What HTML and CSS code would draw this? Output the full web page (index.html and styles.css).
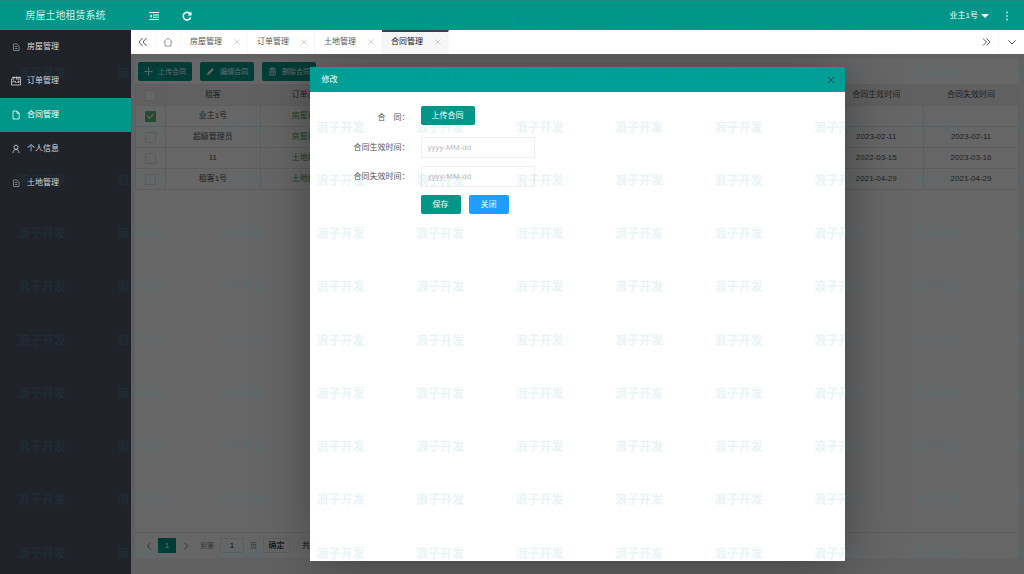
FILE: index.html
```html
<!DOCTYPE html>
<html lang="zh-CN">
<head>
<meta charset="utf-8">
<meta name="viewport" content="width=device-width, initial-scale=1">
<title>房屋土地租赁系统</title>
<link rel="stylesheet" href="styles.css">
</head>
<body>
<div class="app">
  <aside class="sidebar">
    <h1 class="brand">房屋土地租赁系统</h1>
    <nav class="menu">
      <a class="menu-item" href="#"><svg class="menu-icon dim" viewBox="0 0 10 10"><path d="M2.500 2h3.500l2 2v4.500H2.500zM4 4.500h2.500M4 6.500h2.500"/></svg>房屋管理</a>
      <a class="menu-item" href="#"><svg class="menu-icon" viewBox="0 0 10 10"><path d="M1 1.500h9M.5 3h3M.5 3v6h9V3M5 3h5M3 .5v2M5.500 .5v2M8 .5v2M2 6.500V5h1.200v1M4.500 5v1.500h1.200M7 5h1v1.500H7z"/></svg>订单管理</a>
      <a class="menu-item active" href="#"><svg class="menu-icon" viewBox="0 0 10 10"><path d="M2 1h4l2.200 2.200V9H2zM6 1v2.300h2.200"/></svg>合同管理</a>
      <a class="menu-item" href="#"><svg class="menu-icon" viewBox="0 0 10 10"><circle cx="5" cy="3.200" r="2.100"/><path d="M2 9C2 6.500 3.500 5.500 5 5.500S8 6.500 8 9"/></svg>个人信息</a>
      <a class="menu-item" href="#"><svg class="menu-icon dim" viewBox="0 0 10 10"><path d="M2.500 2h3.500l2 2v4.500H2.500zM4 4.500h2.500M4 6.500h2.500"/></svg>土地管理</a>
    </nav>
  </aside>

  <div class="main">
    <header class="topbar">
      <button class="icon-btn" aria-label="收起菜单"><svg width="10" height="10" viewBox="0 0 10 10"><path d="M0 1.500h10M4 4h6M4 6.200h6M0 8.500h10"/><path class="solid" d="M3 3.200v3.800L.3 5.100z"/></svg></button>
      <button class="icon-btn" aria-label="刷新"><svg class="bold" width="10" height="10" viewBox="0 0 10 10"><path d="M8.600 6.500A3.800 3.800 0 1 1 7.800 2.500"/><path class="solid" d="M9.500.6v3.900H5.600z"/></svg></button>
      <span class="grow"></span>
      <button class="user">业主1号<span class="caret"></span></button>
      <button class="more" aria-label="更多"><svg width="4" height="10" viewBox="0 0 4 10"><path d="M1.300 1.500h1.400M1.300 5h1.400M1.300 8.500h1.400"/></svg></button>
    </header>

    <div class="tabs">
      <button class="tab-ctl" aria-label="向左"><svg width="10" height="10" viewBox="0 0 10 10"><path d="M4.500 1L1 5l3.500 4M8.500 1L5 5l3.500 4"/></svg></button>
      <button class="tab-ctl home" aria-label="主页"><svg width="10" height="10" viewBox="0 0 10 10"><path d="M.8 4.800L5 1l4.200 3.800H8V9H2V4.800z"/></svg></button>
      <div class="tab"><a href="#">房屋管理</a><button class="tab-x" aria-label="关闭标签"><svg width="6" height="6" viewBox="0 0 6 6"><path d="M.5.5l5 5M5.500.5l-5 5"/></svg></button></div>
      <div class="tab"><a href="#">订单管理</a><button class="tab-x" aria-label="关闭标签"><svg width="6" height="6" viewBox="0 0 6 6"><path d="M.5.5l5 5M5.500.5l-5 5"/></svg></button></div>
      <div class="tab"><a href="#">土地管理</a><button class="tab-x" aria-label="关闭标签"><svg width="6" height="6" viewBox="0 0 6 6"><path d="M.5.5l5 5M5.500.5l-5 5"/></svg></button></div>
      <div class="tab current"><a href="#">合同管理</a><button class="tab-x" aria-label="关闭标签"><svg width="6" height="6" viewBox="0 0 6 6"><path d="M.5.5l5 5M5.500.5l-5 5"/></svg></button></div>
      <span class="grow"></span>
      <button class="tab-ctl" aria-label="向右"><svg width="10" height="10" viewBox="0 0 10 10"><path d="M2 1.500L5.500 5 2 8.500M5.500 1.500L9 5 5.500 8.500"/></svg></button>
      <button class="tab-ctl last" aria-label="标签菜单"><svg width="10" height="10" viewBox="0 0 10 10"><path d="M1.500 3.500L5 7l3.500-3.500"/></svg></button>
    </div>

    <div class="content">
      <section class="panel">
        <div class="toolbar">
          <button class="btn small"><svg width="9" height="9" viewBox="0 0 10 10"><path d="M5 .5v9M.5 5h9"/></svg>上传合同</button>
          <button class="btn small"><svg width="9" height="9" viewBox="0 0 10 10"><path class="solid" d="M1 9l.7-2.500L7 1.200l1.800 1.800-5.300 5.300z"/></svg>编辑合同</button>
          <button class="btn small"><svg width="9" height="9" viewBox="0 0 10 10"><path d="M1 2.500h8M3.500 2.500V1h3v1.500M2 4.500h6V9H2zM4.200 5v2.500M5.800 5v2.500"/></svg>删除合同</button>
        </div>
        <table class="grid">
          <thead>
            <tr><th class="pick"><input type="checkbox" aria-label="全选"></th><th>租客</th><th>订单类型</th><th></th><th></th><th></th><th></th><th></th><th>合同生效时间</th><th>合同失效时间</th></tr>
          </thead>
          <tbody>
            <tr><td><input type="checkbox" checked aria-label="选择业主1号"></td><td>业主1号</td><td><a href="#">房屋租赁</a></td><td></td><td></td><td></td><td></td><td></td><td></td><td></td></tr>
            <tr><td><input type="checkbox" aria-label="选择超级管理员"></td><td>超级管理员</td><td><a href="#">房屋租赁</a></td><td></td><td></td><td></td><td></td><td></td><td>2023-02-11</td><td>2023-02-11</td></tr>
            <tr><td><input type="checkbox" aria-label="选择11"></td><td>11</td><td><a href="#">土地租赁</a></td><td></td><td></td><td></td><td></td><td></td><td>2022-03-15</td><td>2023-03-16</td></tr>
            <tr><td><input type="checkbox" aria-label="选择租客1号"></td><td>租客1号</td><td><a href="#">土地租赁</a></td><td></td><td></td><td></td><td></td><td></td><td>2021-04-29</td><td>2021-04-29</td></tr>
          </tbody>
        </table>
        <div class="pager">
          <button class="page-arrow" aria-label="上一页"><svg width="8" height="8" viewBox="0 0 10 10"><path d="M7 1L3 5l4 4"/></svg></button>
          <button class="page-now">1</button>
          <button class="page-arrow" aria-label="下一页"><svg width="8" height="8" viewBox="0 0 10 10"><path d="M3 1l4 4-4 4"/></svg></button>
          <label class="page-jump">到第<input type="text" value="1">页</label>
          <button class="page-go">确定</button>
          <span class="total">共 4 条</span>
        </div>
      </section>

      <div class="shade"></div>
      <div class="dialog" role="dialog" aria-labelledby="dialog-title">
        <div class="dialog-head">
          <h2 id="dialog-title">修改</h2>
          <button class="dialog-x" aria-label="关闭窗口"><svg width="8" height="8" viewBox="0 0 8 8"><path d="M1 1l6 6M7 1L1 7"/></svg></button>
        </div>
        <form class="form">
          <label for="file">合　同：</label>
          <button type="button" id="file" class="btn">上传合同</button>
          <label for="start">合同生效时间：</label>
          <input id="start" type="text" placeholder="yyyy-MM-dd">
          <label for="end">合同失效时间：</label>
          <input id="end" type="text" placeholder="yyyy-MM-dd">
          <div class="actions">
            <button type="button" class="btn">保存</button>
            <button type="button" class="btn blue">关闭</button>
          </div>
        </form>
      </div>
    </div>
  </div>
</div>
<div class="watermark" aria-hidden="true"></div>
<script src="watermark.js"></script>
</body>
</html>
```
FILE: styles.css
```css
* { box-sizing: border-box; }
body {
  margin: 0;
  font: 8px/12px "Liberation Sans", "Noto Sans CJK SC", sans-serif;
  color: #555;
}
button, input { font: inherit; color: inherit; }
button { padding: 0; border: 0; background: none; display: flex; align-items: center; justify-content: center; }
a { color: inherit; text-decoration: none; }
h1, h2 { margin: 0; font-weight: 400; }
svg { fill: none; stroke: currentColor; stroke-width: 1; flex: none; }
svg .solid { fill: currentColor; stroke: none; }
svg.bold { stroke-width: 1.6; }
.grow { flex: 1; }

.app { display: flex; min-height: 100vh; }
.sidebar { width: 131px; flex: none; background: #20222a; color: #d8d9da; }
.brand {
  height: 30px;
  line-height: 30px;
  font-size: 10px;
  text-align: center;
  background: #009688;
  color: #d5eeea;
  border-top: 1px solid #21867e;
}
.menu-item { display: flex; align-items: center; gap: 6px; height: 34px; padding-left: 11px; }
.menu-item.active { background: #009688; color: #fff; }
.menu-icon { width: 10px; height: 10px; stroke-width: .8; }
.menu-icon.dim { opacity: .6; }

.main { flex: 1; min-width: 0; display: flex; flex-direction: column; }
.topbar {
  display: flex;
  align-items: center;
  height: 30px;
  padding: 0 15px 0 6px;
  background: #009688;
  border-top: 1px solid #21867e;
  color: #fff;
}
.icon-btn { width: 33px; height: 28px; }
.user { gap: 3px; }
.caret { border: 4px solid transparent; border-top-color: #fff; border-bottom: 0; }
.more { margin-left: 16px; }
.more svg { stroke-width: 1.4; }

.tabs { display: flex; height: 24px; background: #fff; }
.tab-ctl { width: 25px; border-right: 1px solid #f6f6f6; color: #555; }
.tab-ctl.home { color: #999; }
.tab-ctl.last { border-right: 0; }
.tab { width: 67px; padding: 0 7px 0 9px; display: flex; align-items: center; justify-content: space-between; border-right: 1px solid #f6f6f6; }
.tab-x { color: #bbb; }
.tab-x svg { stroke-width: .7; }
.tab.current { background: #f6f6f6; color: #111; border-top: 2px solid #33454a; padding-bottom: 2px; }

.content { flex: 1; position: relative; overflow: hidden; display: flex; flex-direction: column; padding: 4px 4px 15px 3px; background: #f2f2f2; }
.panel { flex: 1; display: flex; flex-direction: column; background: #fff; border: 1px solid #f2f2f2; }
.toolbar { display: flex; gap: 8px; padding: 3px; }
.btn { height: 19px; padding: 0 11px; border-radius: 2px; background: #009688; color: #fff; }
.btn.small { width: 54px; padding: 0; gap: 5px; font-size: 7px; }
.btn.blue { background: #1e9fff; }

.grid { width: 100%; table-layout: fixed; border-collapse: collapse; text-align: center; color: #555; }
.grid th, .grid td { height: 21px; padding: 0; border: 1px solid #e8e8e8; font-weight: 400; }
.grid th { background: #f0f0f0; border-color: #ececec; }
.grid .pick { width: 30px; }
.grid a { color: #3fa85c; }
.grid input { appearance: none; display: block; width: 11px; height: 11px; margin: 0 auto; border: 1px solid #e4e4e4; border-radius: 1px; background: #fff; }
.grid input:checked { background: #5fb878; border-color: #5fb878; display: grid; place-items: center; }
.grid input:checked::after { content: ""; width: 6px; height: 3px; border: solid #fff; border-width: 0 0 1px 1px; rotate: -45deg; translate: 0 -1px; }

.pager { margin-top: auto; height: 26px; display: flex; align-items: center; padding-left: 4px; border-top: 1px solid #ececec; color: #333; }
.page-arrow { width: 19px; color: #555; }
.page-now { width: 18px; height: 15px; background: #009688; color: #fff; }
.page-jump { display: flex; align-items: center; gap: 6px; margin-left: 5px; color: #888; font-size: 7px; }
.page-jump input { width: 24px; height: 15px; padding: 0; border: 1px solid #ececec; text-align: center; background: #fff; color: #222; font-size: 8px; }
.page-go { width: 27px; height: 15px; margin-left: 6px; border: 1px solid #ececec; color: #000; }
.total { margin-left: 12px; }

.shade { position: absolute; inset: 0; background: rgba(0, 0, 0, .6); }
.dialog { position: absolute; left: 20%; top: 13px; width: 60%; height: 95%; background: #fff; box-shadow: 1px 1px 50px rgba(0, 0, 0, .35); }
.dialog-head { display: flex; align-items: center; justify-content: space-between; height: 25px; padding: 0 10px 0 12px; background: #009f95; color: #fff; }
.dialog-head h2 { font-size: 8px; line-height: 12px; }
.dialog-x { color: #164b48; }
.form { display: grid; grid-template-columns: 89px 114px; column-gap: 11px; row-gap: 8px; padding: 14px 11px; align-items: center; justify-items: start; }
.form label { justify-self: end; white-space: nowrap; }
.form > .btn { margin-bottom: 4px; }
.form input { width: 100%; height: 21px; padding: 0 6px; border: 1px solid #eee; background: #fff; }
.form input::placeholder { color: #bbb; }
.actions { grid-column: 2; display: flex; gap: 8px; }
.actions .btn { padding: 0 12px; }

.watermark {
  position: fixed;
  inset: 0;
  overflow: hidden;
  pointer-events: none;
}
.watermark-grid {
  display: grid;
  grid-template-columns: repeat(11, 1fr);
  grid-template-rows: repeat(11, 1fr);
  width: 1095px;
  height: 586px;
  margin: 12px 18px;
  font: 700 12px/15px "Noto Sans CJK SC", sans-serif;
  color: rgba(30, 140, 165, .1);
}
```
FILE: watermark.js
```js
const grid = document.createElement("div");
grid.className = "watermark-grid";
for (let i = 0; i < 11 * 11; i++) {
  const mark = document.createElement("span");
  mark.textContent = "浪子开发";
  grid.append(mark);
}
document.querySelector(".watermark").append(grid);
```
